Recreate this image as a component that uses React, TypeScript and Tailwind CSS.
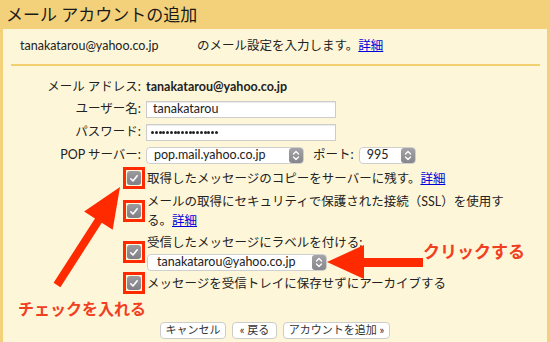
import React from 'react';

const font = { fontFamily: 'Lato, "Noto Sans CJK JP", sans-serif' };

function Stepper({ className = '' }: { className?: string }) {
  return (
    <div className={`flex items-center justify-center rounded-[3px] bg-gradient-to-b from-[#a3a3a8] to-[#86868b] ${className}`}>
      <svg width="8" height="11" viewBox="0 0 8 11" fill="none" stroke="white" strokeWidth="1.3" strokeLinecap="round" strokeLinejoin="round">
        <path d="M1.5 4 L4 1.5 L6.5 4" />
        <path d="M1.5 7 L4 9.5 L6.5 7" />
      </svg>
    </div>
  );
}

function Select({ value, width, pad = 'pl-[7px]' }: { value: string; width: string; pad?: string }) {
  return (
    <div className={`flex h-[17px] items-center justify-between rounded-[4px] border border-[#cfcfcf] bg-white ${width}`}>
      <span className={`text-[12.5px] leading-none text-[#222] ${pad}`}>{value}</span>
      <Stepper className="h-[15px] w-[14px]" />
    </div>
  );
}

function Check() {
  return (
    <div className="flex h-[22px] w-[22px] shrink-0 items-center justify-center border-[3px] border-[#ff2a00]">
      <div className="flex h-[14px] w-[14px] items-center justify-center rounded-[3px] bg-gradient-to-b from-[#9a9a9f] to-[#7f7f85]">
        <svg width="10" height="9" viewBox="0 0 10 9" fill="none" stroke="white" strokeWidth="1.6" strokeLinecap="round" strokeLinejoin="round">
          <path d="M1.8 4.8 L4 7 L8.2 1.8" />
        </svg>
      </div>
    </div>
  );
}

function Row({ label, children, h }: { label: string; children: React.ReactNode; h: string }) {
  return (
    <div className={`flex items-center ${h}`}>
      <div className="w-[138px] text-right text-[12.5px] text-[#222]">{label}</div>
      <div className="ml-[5px] flex items-center">{children}</div>
    </div>
  );
}

const dots = Array.from({ length: 18 });

export default function App() {
  return (
    <div className="relative h-[342px] w-[550px] overflow-hidden" style={font}>
      <div className="flex h-[29px] items-center bg-[#f3d17a] pl-[6px]">
        <span className="text-[17px] leading-none text-[#1a1a1a]">メール アカウントの追加</span>
      </div>

      <div className="h-[313px] border-x-[3px] border-[#f3d17a] bg-[#fef6d9]">
        <div className="flex pl-[17px] pt-[9px] text-[12.5px] leading-[16px] text-[#222]">
          <span className="w-[177px]">tanakatarou@yahoo.co.jp</span>
          <span>のメール設定を入力します。</span>
          <a className="text-[#0000dd] underline">詳細</a>
        </div>
        <div className="ml-[8px] mr-[7px] mt-[10px] h-[2px] bg-[#f4cf6f]" />

        <div className="mt-[10px]">
          <Row label="メール アドレス:" h="h-[22px]">
            <span className="text-[12.5px] font-bold text-[#222]">tanakatarou@yahoo.co.jp</span>
          </Row>
          <Row label="ユーザー名:" h="h-[23px]">
            <div className="flex h-[17px] w-[190px] items-center border border-[#cccccc] bg-white pl-[6px] text-[12.5px] text-[#222] shadow-[inset_0_1px_1px_rgba(0,0,0,0.08)]">
              tanakatarou
            </div>
          </Row>
          <Row label="パスワード:" h="h-[23px]">
            <div className="flex h-[17px] w-[190px] items-center gap-[0.75px] border border-[#cccccc] bg-white pl-[4px] shadow-[inset_0_1px_1px_rgba(0,0,0,0.08)]">
              {dots.map((_, i) => (
                <span key={i} className="h-[3px] w-[3px] rounded-full bg-[#222]" />
              ))}
            </div>
          </Row>
          <Row label="POP サーバー:" h="h-[23px]">
            <Select value="pop.mail.yahoo.co.jp" width="w-[158px]" />
            <span className="ml-[9px] text-[12.5px] text-[#222]">ポート:</span>
            <div className="ml-[5px]">
              <Select value="995" width="w-[57px]" />
            </div>
          </Row>
        </div>

        <div className="pl-[120px] text-[12.5px] leading-[19px] text-[#222]">
          <div className="flex items-center gap-[2px]">
            <Check />
            <span>
              取得したメッセージのコピーをサーバーに残す。<a className="text-[#0000dd] underline">詳細</a>
            </span>
          </div>
          <div className="mt-[3px] flex items-center gap-[2px]">
            <Check />
            <span>
              メールの取得にセキュリティで保護された接続（SSL）を使用す
              <br />
              る。<a className="text-[#0000dd] underline">詳細</a>
            </span>
          </div>
          <div className="mt-[3px] flex items-center gap-[2px]">
            <Check />
            <div className="flex flex-col">
              <span>受信したメッセージにラベルを付ける:</span>
              <div className="mt-[2px]">
                <Select value="tanakatarou@yahoo.co.jp" width="w-[180px]" pad="pl-[9px]" />
              </div>
            </div>
          </div>
          <div className="mt-[1px] flex items-center gap-[2px]">
            <Check />
            <span>メッセージを受信トレイに保存せずにアーカイブする</span>
          </div>
        </div>

        <div className="ml-[157px] mt-[28px] flex gap-[6px] text-[11px] text-[#333]">
          <button className="flex h-[17px] w-[66px] items-center justify-center rounded-[4px] border border-[#cccccc] bg-white">キャンセル</button>
          <button className="flex h-[17px] w-[45px] items-center justify-center rounded-[4px] border border-[#cccccc] bg-white">« 戻る</button>
          <button className="flex h-[17px] w-[107px] items-center justify-center rounded-[4px] border border-[#cccccc] bg-white">アカウントを追加 »</button>
        </div>
      </div>

      <svg className="pointer-events-none absolute left-0 top-0" width="550" height="342">
        <polygon
          fill="#ff2a00"
          points="120,187 112.7,229.8 101.8,222.8 60.4,287.2 53.6,282.8 95,218.4 84.1,211.4"
        />
        <polygon
          fill="#ff2a00"
          points="327,262 364,245 364,258 423,258 423,267 364,267 364,279"
        />
      </svg>
      <span className="absolute left-[18px] top-[299px] text-[16px] font-bold leading-[20px] text-[#f0401f]">チェックを入れる</span>
      <span className="absolute left-[423px] top-[241px] text-[17px] font-bold leading-[22px] text-[#f0401f]">クリックする</span>
    </div>
  );
}
